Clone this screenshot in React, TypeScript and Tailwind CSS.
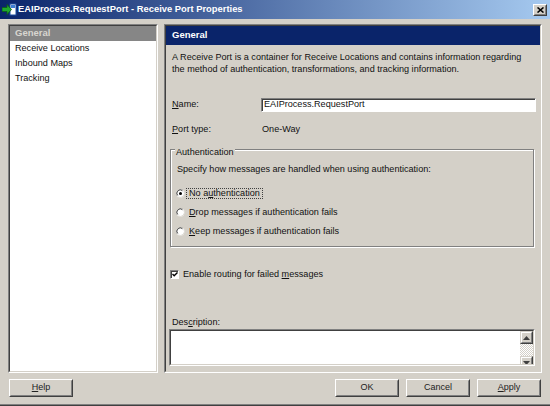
import type { ReactNode } from 'react'

const font = { fontFamily: '"Liberation Sans", Arial, sans-serif' }

function Sunken({ className = '', children }: { className?: string; children?: ReactNode }) {
  return (
    <div className={`border border-t-[#808080] border-l-[#808080] border-r-white border-b-white ${className}`}>
      <div className="flex h-full w-full flex-col border border-t-[#404040] border-l-[#404040] border-r-[#d4d0c8] border-b-[#d4d0c8]">
        {children}
      </div>
    </div>
  )
}

function Button({ children, className = '' }: { children: ReactNode; className?: string }) {
  return (
    <div className={`h-[18px] w-[64px] border border-t-white border-l-white border-r-[#404040] border-b-[#404040] ${className}`}>
      <div className="flex h-full items-center justify-center border border-t-[#d4d0c8] border-l-[#d4d0c8] border-r-[#808080] border-b-[#808080] text-[9px] text-[#222]">
        {children}
      </div>
    </div>
  )
}

function Radio({ checked }: { checked?: boolean }) {
  return (
    <svg width="9" height="9" viewBox="0 0 12 12" className="shrink-0">
      <circle cx="6" cy="6" r="5.5" fill="#fff" />
      <path d="M1.5 9 A5.5 5.5 0 0 1 9 1.5" fill="none" stroke="#808080" strokeWidth="1" />
      <path d="M2.5 8.5 A4 4 0 0 1 8.5 2.5" fill="none" stroke="#404040" strokeWidth="1" />
      <path d="M10.5 3 A5.5 5.5 0 0 1 3 10.5" fill="none" stroke="#d4d0c8" strokeWidth="1" />
      {checked && <circle cx="6" cy="6" r="2" fill="#000" />}
    </svg>
  )
}

function ArrowButton({ up }: { up?: boolean }) {
  return (
    <div className="h-[13px] w-[13px] shrink-0 border border-t-[#d4d0c8] border-l-[#d4d0c8] border-r-[#404040] border-b-[#404040] bg-[#d4d0c8]">
      <div className="flex h-full items-center justify-center border border-t-white border-l-white border-r-[#808080] border-b-[#808080]">
        <svg width="7" height="4" viewBox="0 0 7 4">
          <path d={up ? 'M3.5 0 L7 4 L0 4 Z' : 'M0 0 L7 0 L3.5 4 Z'} fill="#404040" />
        </svg>
      </div>
    </div>
  )
}

export default function App() {
  const items = ['Receive Locations', 'Inbound Maps', 'Tracking']

  return (
    <div
      className="flex h-[406px] w-[550px] flex-col overflow-hidden bg-[#d4d0c8] text-[9.1px] text-[#111] shadow-[inset_0_-1px_0_#404040,inset_0_-2px_0_#808080]"
      style={font}
    >
      {/* title bar */}
      <div className="flex h-[19px] shrink-0 items-center bg-[linear-gradient(to_right,#0a246a,#a6caf0)] pl-[2px] pr-[3px]">
        <svg width="15" height="13" viewBox="0 0 15 13" className="shrink-0">
          <rect x="8" y="1" width="6" height="11" fill="#fff" stroke="#1d4fa0" strokeWidth="1" />
          <rect x="9" y="2" width="4" height="3" fill="#3d7fd6" />
          <path d="M0 4.5 H5 V1.5 L9.5 6.5 L5 11.5 V8.5 H0 Z" fill="#1fa82e" stroke="#0d5c16" strokeWidth="0.8" />
        </svg>
        <span className="ml-[1px] text-[9.4px] font-bold text-white">EAIProcess.RequestPort - Receive Port Properties</span>
        <div className="ml-auto h-[12px] w-[14px] border border-t-white border-l-white border-r-[#404040] border-b-[#404040] bg-[#d4d0c8]">
          <div className="flex h-full items-center justify-center border border-t-[#d4d0c8] border-l-[#d4d0c8] border-r-[#808080] border-b-[#808080]">
            <svg width="7" height="6" viewBox="0 0 7 6">
              <path d="M0.5 0.5 L6.5 5.5 M6.5 0.5 L0.5 5.5" stroke="#000" strokeWidth="1.6" />
            </svg>
          </div>
        </div>
      </div>

      {/* body */}
      <div className="mt-[5px] flex h-[349px] shrink-0 gap-[6px] pl-[8px]">
        <Sunken className="h-full w-[150px]">
          <div className="flex h-full flex-col bg-white">
            <div className="flex h-[15px] items-center bg-[#868686] pl-[5px] text-[9.5px] font-bold text-[#d8d6d0]">General</div>
            {items.map((it) => (
              <div key={it} className="flex h-[15px] items-center pl-[5px]">
                {it}
              </div>
            ))}
          </div>
        </Sunken>

        <Sunken className="h-full w-[378px]">
          <div className="flex h-[19px] shrink-0 items-center bg-[#0a246a] pl-[6px] text-[9.5px] font-bold text-white">General</div>
          <div className="flex flex-col px-[4px]">
            <div className="mt-[6px] pl-[2px] leading-[12px]">
              A Receive Port is a container for Receive Locations and contains information regarding
              <br />
              the method of authentication, transformations, and tracking information.
            </div>

            <div className="mt-[23px] flex h-[14px] items-center">
              <div className="w-[91px] pl-[2px]">
                <u>N</u>ame:
              </div>
              <div className="flex h-[14px] flex-1 items-center border border-t-[#808080] border-l-[#808080] border-r-white border-b-white bg-white pl-[2px] shadow-[inset_1px_1px_0_#404040]">
                EAIProcess.RequestPort
              </div>
            </div>

            <div className="mt-[11px] flex h-[13px] items-center">
              <div className="w-[92px] pl-[2px]">
                <u>P</u>ort type:
              </div>
              <div>One-Way</div>
            </div>

            <div className="relative mr-[2px] mt-[13px] border border-[#808080] shadow-[inset_1px_1px_0_#fff,1px_1px_0_#fff]">
              <div className="absolute left-[4px] top-[-4px] bg-[#d4d0c8] px-[1px] leading-[12px]">Authentication</div>
              <div className="pl-[6px] pt-[13px] leading-[12px]">Specify how messages are handled when using authentication:</div>
              <div className="mt-[9px] flex flex-col pb-[5px] pl-[5px]">
                <div className="flex h-[19px] items-center gap-[1px]">
                  <Radio checked />
                  <span className="border border-dotted border-[#404040] px-[2px] leading-[9px]">
                    No a<u>u</u>thentication
                  </span>
                </div>
                <div className="flex h-[19px] items-center gap-[1px]">
                  <Radio />
                  <span className="border border-transparent px-[2px]">
                    <u>D</u>rop messages if authentication fails
                  </span>
                </div>
                <div className="flex h-[19px] items-center gap-[1px]">
                  <Radio />
                  <span className="border border-transparent px-[2px]">
                    <u>K</u>eep messages if authentication fails
                  </span>
                </div>
              </div>
            </div>

            <div className="mt-[21px] flex h-[13px] items-center gap-[4px]">
              <div className="flex h-[9px] w-[9px] items-center justify-center border border-t-[#808080] border-l-[#808080] border-r-white border-b-white bg-white shadow-[inset_1px_1px_0_#404040]">
                <svg width="6" height="5" viewBox="0 0 7 6">
                  <path d="M0.5 2.5 L2.5 4.5 L6.5 0.5" fill="none" stroke="#000" strokeWidth="1.6" />
                </svg>
              </div>
              <span>
                Enable routing for failed <u>m</u>essages
              </span>
            </div>

            <div className="mt-[35px] pl-[2px] leading-[12px]">
              Des<u>c</u>ription:
            </div>
            <Sunken className="ml-[-1px] mr-[1px] mt-[1px] h-[37px]">
              <div className="flex h-full flex-row bg-white">
                <div className="flex-1" />
                <div className="flex w-[13px] flex-col overflow-hidden">
                  <ArrowButton up />
                  <div className="h-[12px] shrink-0 bg-[repeating-conic-gradient(#ffffff_0_25%,#d4d0c8_0_50%)] bg-[length:2px_2px]" />
                  <ArrowButton />
                </div>
              </div>
            </Sunken>
          </div>
        </Sunken>
      </div>

      {/* footer */}
      <div className="mt-[6px] flex pl-[9px] pr-[9px]">
        <Button>
          <u>H</u>elp
        </Button>
        <div className="ml-auto flex gap-[7px]">
          <Button>OK</Button>
          <Button>Cancel</Button>
          <Button>
            <u>A</u>pply
          </Button>
        </div>
      </div>
    </div>
  )
}
